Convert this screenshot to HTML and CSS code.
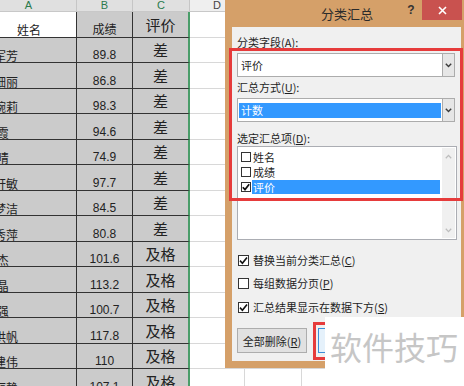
FILE: index.html
```html
<!DOCTYPE html>
<html>
<head>
<meta charset="utf-8">
<link rel="stylesheet" href="styles.css">
</head>
<body>
<div class="sheet">
  <div class="hd sel">A</div><div class="hd sel">B</div><div class="hd sel hd-c">C</div><div class="hd">D</div><div class="hd"></div><div class="hd"></div><div class="hd"></div>

  <div class="c name head white">姓名</div><div class="c num head-cjk">成绩</div><div class="c rate">评价</div><div class="b"></div><div class="b"></div><div class="b"></div><div class="b"></div>
  <div class="c name">李军芳</div><div class="c num">89.8</div><div class="c rate">差</div><div class="b"></div><div class="b"></div><div class="b"></div><div class="b"></div>
  <div class="c name">陈细丽</div><div class="c num">86.8</div><div class="c rate">差</div><div class="b"></div><div class="b"></div><div class="b"></div><div class="b"></div>
  <div class="c name">孙婉莉</div><div class="c num">98.3</div><div class="c rate">差</div><div class="b"></div><div class="b"></div><div class="b"></div><div class="b"></div>
  <div class="c name">周 霞</div><div class="c num">94.6</div><div class="c rate">差</div><div class="b"></div><div class="b"></div><div class="b"></div><div class="b"></div>
  <div class="c name">吴 晴</div><div class="c num">74.9</div><div class="c rate">差</div><div class="b"></div><div class="b"></div><div class="b"></div><div class="b"></div>
  <div class="c name">郑轩敏</div><div class="c num">97.7</div><div class="c rate">差</div><div class="b"></div><div class="b"></div><div class="b"></div><div class="b"></div>
  <div class="c name">冯梦洁</div><div class="c num">84.5</div><div class="c rate">差</div><div class="b"></div><div class="b"></div><div class="b"></div><div class="b"></div>
  <div class="c name">陈秀萍</div><div class="c num">80.8</div><div class="c rate">差</div><div class="b"></div><div class="b"></div><div class="b"></div><div class="b"></div>
  <div class="c name">褚 杰</div><div class="c num">101.6</div><div class="c rate">及格</div><div class="b"></div><div class="b"></div><div class="b"></div><div class="b"></div>
  <div class="c name">卫 晶</div><div class="c num">113.2</div><div class="c rate">及格</div><div class="b"></div><div class="b"></div><div class="b"></div><div class="b"></div>
  <div class="c name">蒋 强</div><div class="c num">100.7</div><div class="c rate">及格</div><div class="b"></div><div class="b"></div><div class="b"></div><div class="b"></div>
  <div class="c name">沈洪帆</div><div class="c num">117.8</div><div class="c rate">及格</div><div class="b"></div><div class="b"></div><div class="b"></div><div class="b"></div>
  <div class="c name">韩建伟</div><div class="c num">110</div><div class="c rate">及格</div><div class="b"></div><div class="b"></div><div class="b"></div><div class="b"></div>
  <div class="c name">杨丽静</div><div class="c num">107.1</div><div class="c rate">及格</div><div class="b"></div><div class="b"></div><div class="b"></div><div class="b"></div>
</div>

<div class="dialog">
  <div class="titlebar">
    <div class="title">分类汇总</div>
    <div class="help">?</div>
    <div class="close">
      <svg width="9" height="9" viewBox="0 0 9 9"><path d="M1 1 L8 8 M8 1 L1 8" stroke="#fff" stroke-width="1.6" fill="none"/></svg>
    </div>
  </div>
  <div class="dbody">
    <div class="lbl lbl1">分类字段(<span class="u">A</span>):</div>
    <div class="combo">
      <div class="combo-text">评价</div>
      <div class="drop"><svg width="7" height="5" viewBox="0 0 7 5"><path d="M0.8 0.8 L3.5 3.6 L6.2 0.8" stroke="#3a3a3a" stroke-width="1.4" fill="none"/></svg></div>
    </div>
    <div class="lbl lbl2">汇总方式(<span class="u">U</span>):</div>
    <div class="combo">
      <div class="combo-sel">计数</div>
      <div class="drop"><svg width="7" height="5" viewBox="0 0 7 5"><path d="M0.8 0.8 L3.5 3.6 L6.2 0.8" stroke="#3a3a3a" stroke-width="1.4" fill="none"/></svg></div>
    </div>
    <div class="lbl lbl3">选定汇总项(<span class="u">D</span>):</div>
    <div class="list">
      <div class="items">
        <div class="item"><span class="cb"></span><span class="item-label">姓名</span></div>
        <div class="item"><span class="cb"></span><span class="item-label">成绩</span></div>
        <div class="item sel"><span class="cb"><svg width="8" height="8" viewBox="0 0 8 8"><path d="M0.8 4.2 L3 6.6 L7.2 1.2" stroke="#111" stroke-width="1.7" fill="none"/></svg></span><span class="item-label">评价</span></div>
      </div>
      <div class="scroll">
        <svg width="7" height="5" viewBox="0 0 7 5"><path d="M0.8 4.2 L3.5 1.4 L6.2 4.2" stroke="#bdbdbd" stroke-width="1.3" fill="none"/></svg>
        <svg width="7" height="5" viewBox="0 0 7 5"><path d="M0.8 0.8 L3.5 3.6 L6.2 0.8" stroke="#bdbdbd" stroke-width="1.3" fill="none"/></svg>
      </div>
    </div>
    <div class="chk chk1"><span class="cb"><svg width="9" height="9" viewBox="0 0 9 9"><path d="M1 4.6 L3.4 7.2 L8 1.4" stroke="#111" stroke-width="1.6" fill="none"/></svg></span>替换当前分类汇总(<span class="u">C</span>)</div>
    <div class="chk chk2"><span class="cb"></span>每组数据分页(<span class="u">P</span>)</div>
    <div class="chk chk3"><span class="cb"><svg width="9" height="9" viewBox="0 0 9 9"><path d="M1 4.6 L3.4 7.2 L8 1.4" stroke="#111" stroke-width="1.6" fill="none"/></svg></span>汇总结果显示在数据下方(<span class="u">S</span>)</div>
    <div class="buttons">
      <div class="btn">全部删除(<span class="u">R</span>)</div>
      <div class="btn def"></div>
      <div class="btn"></div>
    </div>
  </div>
</div>

<div class="annot annot-main"></div>
<div class="annot annot-btn"></div>
<div class="watermark">软件技巧</div>
</body>
</html>
```

FILE: styles.css
```css
* { box-sizing: border-box; }
html, body { margin: 0; padding: 0; }
body {
  width: 464px;
  height: 386px;
  overflow: hidden;
  position: relative;
  background: #fff;
  font-family: "Noto Sans CJK SC", "Liberation Sans", sans-serif;
  color: #222;
}

/* ---------- spreadsheet ---------- */
.sheet {
  display: grid;
  grid-template-columns: 96px 56px 57px 55px 57px 57px 120px;
  grid-template-rows: 12px repeat(15, 25.5px);
  margin-left: -19px;
  width: 498px;
}
.hd {
  background: #efefef;
  border-right: 1px solid #c6c6c6;
  border-bottom: 1px solid #c8c8c8;
  font: 11px/10px "Liberation Sans", sans-serif;
  color: #444;
  text-align: center;
}
.hd.sel { background: #e0e0e0; color: #2a7a4c; }

.c {
  display: flex;
  background: #cbcbcb;
  border-right: 1px solid #333;
  border-bottom: 1px solid #333;
  overflow: hidden;
  white-space: pre;
}
.c.white { background: #fff; }
.name {
  font-size: 12px;
  line-height: 13px;
  align-items: flex-end;
  padding-left: 1px;
}
.name.head { justify-content: center; padding-bottom: 1px; }
.num {
  font: 12px/14px "Liberation Sans", sans-serif;
  justify-content: center;
  align-items: flex-end;
}
.num.head-cjk { font-family: "Noto Sans CJK SC", sans-serif; font-size: 12px; padding-bottom: 1px; }
.rate {
  font-size: 15px;
  line-height: 18px;
  justify-content: center;
  align-items: center;
  padding-top: 1px;
  border-right: 2px solid #4a9d69;
}
.b {
  background: #fff;
  border-right: 1px solid #d8d8d8;
  border-bottom: 1px solid #d8d8d8;
}

/* ---------- dialog ---------- */
.dialog {
  position: absolute;
  left: 225px;
  top: 0;
  width: 239px;
  height: 368px;
  background: #d5a069;
  padding: 0 3px 7px 7px;
  display: flex;
  flex-direction: column;
  font-size: 11px;
  color: #1e1e1e;
}
.titlebar {
  height: 27px;
  display: flex;
  align-items: flex-start;
  margin-right: -3px;
}
.title {
  flex: 1;
  padding-left: 62px;
  padding-top: 7px;
  text-align: center;
  font-size: 13px;
  line-height: 13px;
  color: #2b2b2b;
}
.help {
  width: 22px;
  padding-top: 4px;
  text-align: center;
  font: bold 12px/12px "Liberation Sans", sans-serif;
  color: #333;
}
.close {
  width: 40px;
  height: 20px;
  margin-right: 2px;
  background: #c9524f;
  display: flex;
  align-items: center;
  justify-content: center;
}
.dbody {
  flex: 1;
  background: #f0f0f0;
  padding: 8px 4px 0 5px;
  display: flex;
  flex-direction: column;
}
.u { text-decoration: underline; }
.lbl { line-height: 14px; }
.lbl2 { margin-top: 3px; }
.lbl3 { margin-top: 9px; }

.combo {
  height: 24px;
  margin-top: 4px;
  margin-right: 2px;
  border: 1px solid #acacac;
  background: #fff;
  display: flex;
}
.combo-text { flex: 1; padding-left: 3px; line-height: 22px; }
.combo-sel {
  flex: 1;
  margin: 4px 1px 3px 1px;
  padding-left: 2px;
  background: #3399ff;
  color: #fff;
  line-height: 15px;
}
.drop {
  width: 13px;
  margin: -1px -1px -1px 0;
  background: #e6e6e6;
  border: 1px solid #acacac;
  display: flex;
  align-items: center;
  justify-content: center;
}

.list {
  height: 94px;
  margin-top: 1px;
  border: 1px solid #abadb3;
  background: #fff;
  display: flex;
}
.items { flex: 1; padding: 2px 0 0 3px; }
.item { height: 15px; display: flex; align-items: center; }
.cb {
  width: 10px;
  height: 10px;
  flex: none;
  border: 1px solid #333;
  background: #fff;
  display: flex;
  align-items: center;
  justify-content: center;
}
.item-label { margin-left: 1px; margin-right: 2px; padding: 0 1px; line-height: 14px; }
.item.sel .item-label { flex: 1; background: #3399ff; color: #fff; }
.scroll {
  width: 13px;
  margin: 1px 1px 1px 0;
  padding: 6px 0 5px;
  background: #f0f0f0;
  display: flex;
  flex-direction: column;
  justify-content: space-between;
  align-items: center;
}

.chk { display: flex; align-items: center; line-height: 14px; }
.chk .cb { width: 11px; height: 11px; margin: 0 4px 0 1px; }
.chk1 { margin-top: 13px; }
.chk2 { margin-top: 9px; }
.chk3 { margin-top: 10px; }

.buttons { display: flex; gap: 11px; margin-top: 14px; }
.btn {
  width: 70px;
  height: 25px;
  flex: none;
  border: 1px solid #adadad;
  background: #e1e1e1;
  display: flex;
  align-items: center;
  justify-content: center;
  line-height: 14px;
}
.btn.def { border-color: #3c8fd8; background: #e5f1fb; }

/* ---------- overlays ---------- */
.annot {
  position: absolute;
  border: 3px solid #e63b3b;
}
.annot-main { left: 229px; top: 48px; width: 234px; height: 153px; }
.annot-btn { left: 313px; top: 322px; width: 80px; height: 38px; }
.watermark {
  position: absolute;
  left: 325px;
  top: 317px;
  right: 0;
  bottom: 0;
  background: #fff;
  padding: 13px 0 0 5px;
  font-size: 32px;
  line-height: 32px;
  color: #c6c6c6;
  white-space: nowrap;
}
```
